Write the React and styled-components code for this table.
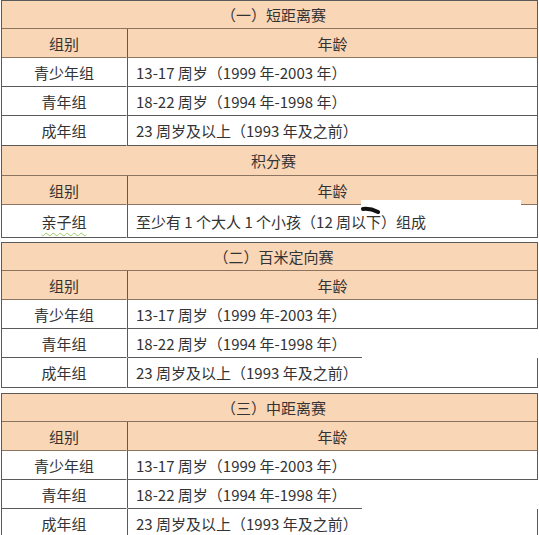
import React from "react";
import styled, { createGlobalStyle } from "styled-components";

const PEACH = "#f9d6b6";
const LINE = "#5a5a5a";
const PEACH_LINE = "#8c7560";

const GlobalStyle = createGlobalStyle`
  body {
    margin: 0;
    background: #ffffff;
    font-family: "Noto Sans CJK SC", "Noto Sans", sans-serif;
    color: #333333;
  }
`;

const Sheet = styled.div`
  width: 537px;
  margin-left: 1px;
  display: flex;
  flex-direction: column;
`;

const Table = styled.div`
  border-top: 1px solid ${LINE};
  border-left: 1px solid ${LINE};
  margin-top: ${(p) => p.$gap || 0}px;
`;

const Row = styled.div`
  display: grid;
  grid-template-columns: 125px 1fr;
  height: ${(p) => p.$h || 29}px;
`;

const Title = styled.div`
  grid-column: 1 / -1;
  display: flex;
  align-items: center;
  justify-content: center;
  background: ${PEACH};
  border-right: 1px solid ${LINE};
  border-bottom: 1px solid ${PEACH_LINE};
  font-size: 15px;
  padding-left: 8px;
`;

const Cell = styled.div`
  position: relative;
  display: flex;
  align-items: center;
  justify-content: ${(p) => (p.$wide && !p.$head ? "flex-start" : "center")};
  padding-left: ${(p) => (p.$wide && !p.$head ? "8px" : "0")};
  background: ${(p) => (p.$head ? PEACH : "#ffffff")};
  font-size: 15px;
  white-space: nowrap;
  border-left: ${(p) => (p.$wide ? `1px solid ${LINE}` : "none")};
  border-right: ${(p) =>
    p.$wide && !p.$cut ? `1px solid ${LINE}` : "1px solid transparent"};
  border-bottom: ${(p) =>
    p.$cut
      ? "1px solid transparent"
      : `1px solid ${p.$head ? PEACH_LINE : LINE}`};
  background-image: ${(p) =>
    p.$cut ? `linear-gradient(${LINE}, ${LINE})` : "none"};
  background-repeat: no-repeat;
  background-position: left bottom;
  background-size: 235px 1px;
  background-origin: border-box;
`;

const Spell = styled.span`
  text-decoration: underline wavy #9ccc65;
  text-decoration-thickness: 1px;
  text-underline-offset: 4px;
`;

const Patch = styled.div`
  position: absolute;
  left: 233px;
  top: -5px;
  width: 160px;
  height: 5px;
  background: #ffffff;
`;

const Scribble = styled.svg`
  position: absolute;
  left: 233px;
  top: 1px;
`;

const ageRows = [
  ["青少年组", "13-17 周岁（1999 年-2003 年）"],
  ["青年组", "18-22 周岁（1994 年-1998 年）"],
  ["成年组", "23 周岁及以上（1993 年及之前）"],
];

const Head = () => (
  <Row>
    <Cell $head>组别</Cell>
    <Cell $head $wide>
      年龄
    </Cell>
  </Row>
);

const AgeRows = ({ broken }) =>
  ageRows.map(([group, age], i) => (
    <Row key={group} $h={i === 2 ? 30 : 29}>
      <Cell>{group}</Cell>
      <Cell $wide $cut={broken && i === 1}>
        {age}
      </Cell>
    </Row>
  ));

export default function App() {
  return (
    <>
      <GlobalStyle />
      <Sheet>
        <Table>
          <Row $h={28}>
            <Title>（一）短距离赛</Title>
          </Row>
          <Head />
          <AgeRows />
          <Row $h={30}>
            <Title>积分赛</Title>
          </Row>
          <Head />
          <Row $h={33}>
            <Cell>
              <Spell>亲子组</Spell>
            </Cell>
            <Cell $wide>
              至少有 1 个大人 1 个小孩（12 周以下）组成
              <Patch />
              <Scribble width="20" height="10" viewBox="0 0 20 10">
                <path
                  d="M2 3 Q9 2, 17 6"
                  stroke="#111"
                  strokeWidth="4"
                  strokeLinecap="round"
                  fill="none"
                />
              </Scribble>
            </Cell>
          </Row>
        </Table>

        <Table $gap={4}>
          <Row $h={28}>
            <Title>（二）百米定向赛</Title>
          </Row>
          <Head />
          <AgeRows broken />
        </Table>

        <Table $gap={5}>
          <Row $h={28}>
            <Title>（三）中距离赛</Title>
          </Row>
          <Head />
          <AgeRows broken />
        </Table>
      </Sheet>
    </>
  );
}
